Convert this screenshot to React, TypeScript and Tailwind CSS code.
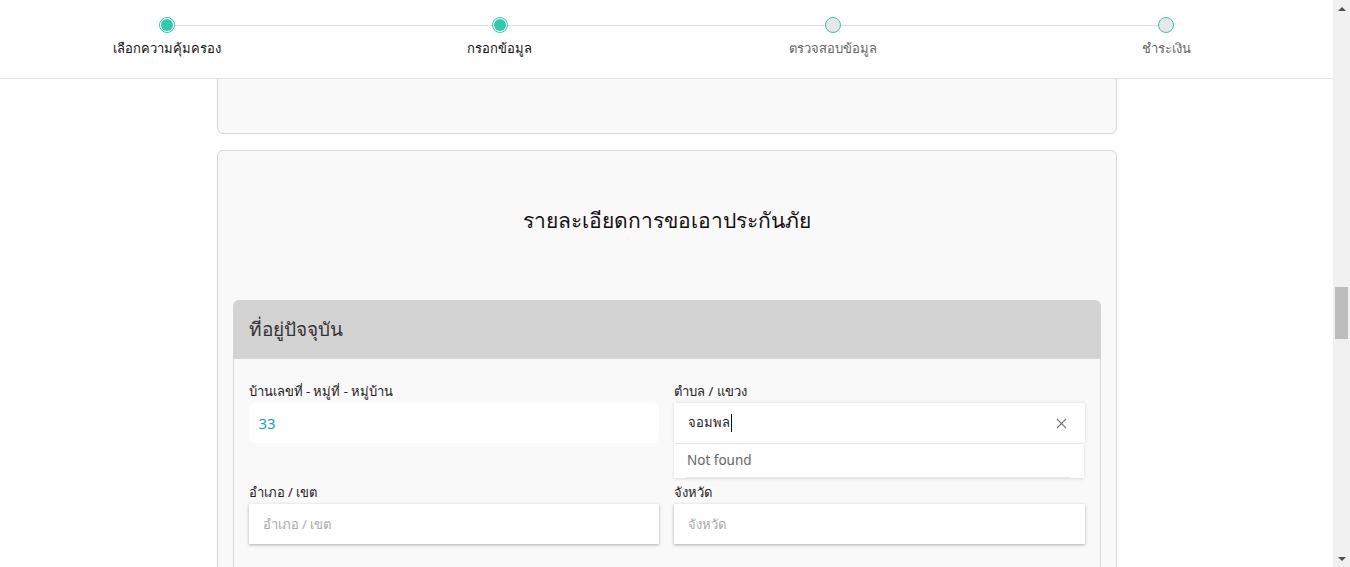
import { useLayoutEffect, useRef } from 'react'
import { X } from 'lucide-react'

const STEPS = [
  { label: 'เลือกความคุ้มครอง', done: true },
  { label: 'กรอกข้อมูล', done: true },
  { label: 'ตรวจสอบข้อมูล', done: false },
  { label: 'ชำระเงิน', done: false },
]

function Stepper() {
  return (
    <header className="sticky top-0 z-20 h-[79px] border-b border-[#e2e2e2] bg-white">
      <div className="relative grid grid-cols-4">
        <div className="absolute left-[12.5%] right-[12.5%] top-[25px] h-px bg-[#dedede]" />
        {STEPS.map((s) => (
          <div key={s.label} className="relative flex flex-col items-center pt-[17px]">
            {s.done ? (
              <span className="flex h-4 w-4 items-center justify-center rounded-full border border-[#2ecbab] bg-white">
                <span className="h-3 w-3 rounded-full bg-[#2ecbab]" />
              </span>
            ) : (
              <span className="h-4 w-4 rounded-full border-[1.5px] border-[#2ecbab] bg-[#e8e8e8]" />
            )}
            <span className={`mt-[5px] text-[13px] leading-5 ${s.done ? 'text-[#111]' : 'text-[#666]'}`}>{s.label}</span>
          </div>
        ))}
      </div>
    </header>
  )
}

// window scrollbar (page is scrolled about halfway)
function ScrollBar() {
  return (
    <aside className="flex w-[17px] shrink-0 flex-col items-center bg-[#f1f1f1]">
      <div className="flex h-[17px] items-center">
        <span className="h-0 w-0 border-x-[4px] border-b-[4px] border-x-transparent border-b-[#505050]" />
      </div>
      <div className="mt-[270px] h-[52px] w-[13px] bg-[#bcbcbc]" />
      <div className="mt-auto flex h-[17px] items-center">
        <span className="h-0 w-0 border-x-[4px] border-t-[4px] border-x-transparent border-t-[#505050]" />
      </div>
    </aside>
  )
}

export default function App() {
  const scrollRef = useRef<HTMLDivElement>(null)
  const cardRef = useRef<HTMLDivElement>(null)

  useLayoutEffect(() => {
    if (scrollRef.current && cardRef.current) {
      scrollRef.current.scrollTop = cardRef.current.offsetTop - 150
    }
  }, [])

  return (
    <div className="flex h-[567px] bg-white text-[#222]" style={{ fontFamily: '"Noto Sans", "Open Sans", sans-serif' }}>
      <div ref={scrollRef} className="relative min-w-0 flex-1 overflow-hidden">
        <Stepper />

        <main className="mx-auto flex w-[900px] flex-col gap-4 pt-4 pb-10">
          {/* ข้อมูลรถ (ส่วนก่อนหน้า) */}
          <div className="h-[3040px] rounded-md border border-[#d6d6d6] bg-[#f9f9f9]" />

          {/* รายละเอียดการขอเอาประกันภัย */}
          <div ref={cardRef} className="rounded-md border border-[#d6d6d6] bg-[#f9f9f9] px-[15px] pt-[54px]">
            <h2 className="text-center text-[21px] leading-[30px] text-[#111]">รายละเอียดการขอเอาประกันภัย</h2>

            <section className="mt-[65px]">
              <div className="flex h-[59px] items-center rounded-t-md bg-[#d3d3d3] pl-4 text-[19px] text-[#333]">
                ที่อยู่ปัจจุบัน
              </div>
              <div className="grid grid-cols-2 gap-x-[15px] gap-y-[39px] border-x border-[#d9d9d9] bg-[#f9f9f9] px-[15px] pt-[22px] pb-10">
                <div>
                  <label className="mb-[2px] block text-[13px] leading-5">บ้านเลขที่ - หมู่ที่ - หมู่บ้าน</label>
                  <div className="flex h-10 items-center rounded-md bg-white pl-[10px] text-[15px] text-[#23a3a6]">33</div>
                </div>

                <div>
                  <label className="mb-[2px] block text-[13px] leading-5">ตำบล / แขวง</label>
                  <div className="relative">
                    <div className="flex h-10 items-center bg-white pr-[15px] pl-[14px] text-[13px] text-[#222] shadow-[0_0_3px_rgba(0,0,0,0.15)]">
                      <span>จอมพล</span>
                      <span className="ml-px h-[18px] w-px bg-[#111]" />
                      <X className="ml-auto h-[17px] w-[17px] text-[#777]" strokeWidth={1.5} />
                    </div>
                    <div className="absolute top-[41px] right-px left-0 z-10 h-[34px] bg-white px-[13px] shadow-[0_1px_3px_rgba(0,0,0,0.12)]">
                      <div className="flex h-full items-center border-b border-[#e6e6e6] text-[13.5px] text-[#666]">Not found</div>
                    </div>
                  </div>
                </div>

                <div>
                  <label className="mb-[2px] block text-[13px] leading-5">อำเภอ / เขต</label>
                  <input
                    placeholder="อำเภอ / เขต"
                    className="h-10 w-full bg-white pl-[14px] text-[13px] outline-none placeholder:text-[#aaa] shadow-[0_1px_3px_rgba(0,0,0,0.3)]"
                  />
                </div>

                <div>
                  <label className="mb-[2px] block text-[13px] leading-5">จังหวัด</label>
                  <input
                    placeholder="จังหวัด"
                    className="h-10 w-full bg-white pl-[14px] text-[13px] outline-none placeholder:text-[#aaa] shadow-[0_1px_3px_rgba(0,0,0,0.3)]"
                  />
                </div>
              </div>
            </section>

            <div className="h-[2240px]" />
          </div>
        </main>
      </div>
      <ScrollBar />
    </div>
  )
}
